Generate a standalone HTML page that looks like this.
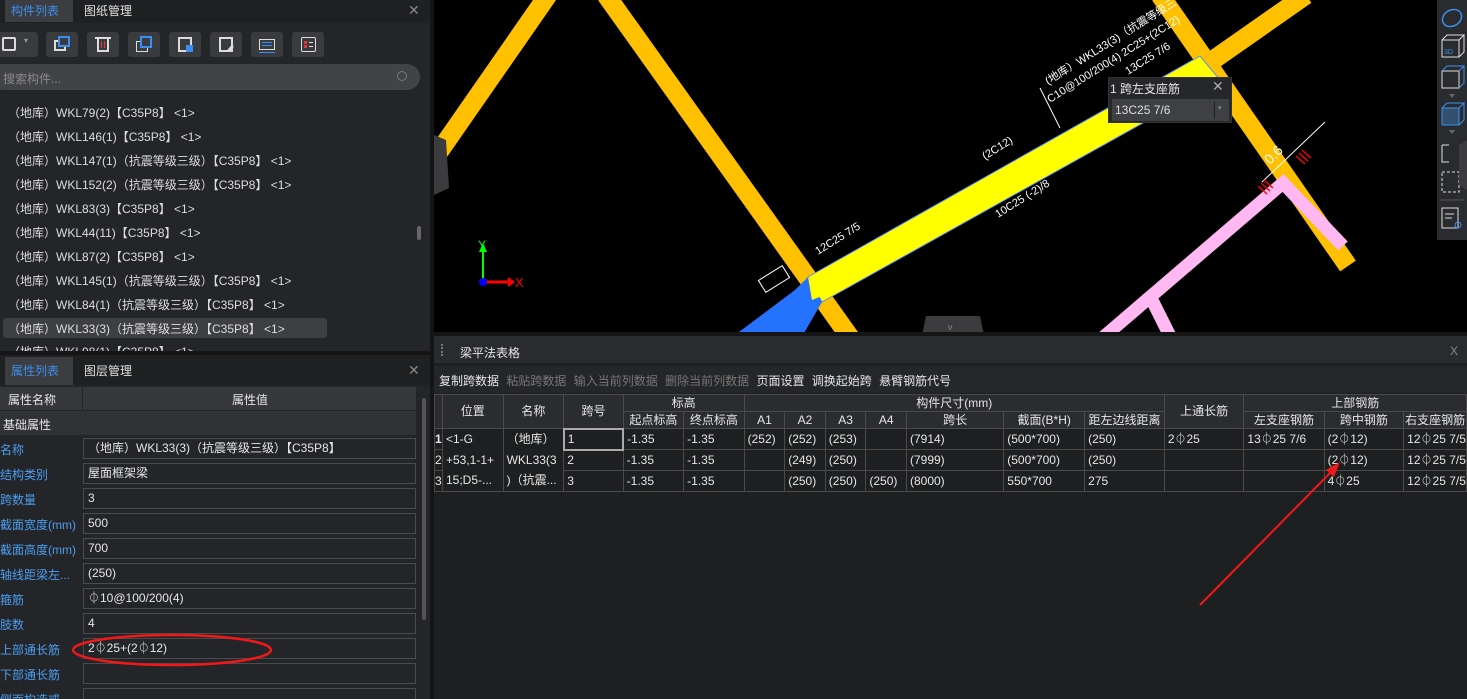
<!DOCTYPE html>
<html style="overflow:hidden;width:1467px;height:699px"><head><meta charset="utf-8"><style>
*{margin:0;padding:0;box-sizing:border-box}
body{width:1467px;height:699px;overflow:hidden;background:#000;font-family:"Liberation Sans","Noto Sans CJK SC",sans-serif;font-size:12px;color:#ddd;position:relative}
.abs{position:absolute}
.lp{left:0;width:430px;background:#242528}
.tab{position:absolute;height:22px;line-height:22px;font-size:12px;padding:0 6px}
.tb{position:absolute;top:32px;width:32px;height:25px;background:#3a3b3e;border-radius:3px}
.li{position:absolute;left:8px;font-size:12px;color:#ddd;white-space:nowrap}
.pn{position:absolute;left:0;color:#4a9ef0;font-size:12px;white-space:nowrap}
.pv{position:absolute;left:83px;width:333px;height:21px;border:1px solid #4a4b4e;background:#242528;padding-left:4px;line-height:19px;font-size:12px;color:#e6e6e6;overflow:hidden}
table{border-collapse:collapse;position:absolute;left:434px;top:394px;table-layout:fixed}
td{border:1px solid #4a4a4a;height:21px;line-height:19px;font-size:12px;color:#e6e6e6;padding:0 0 0 3px;white-space:nowrap;overflow:hidden;background:#1e1f21}
td.h{text-align:center;padding:0;background:#2b2c2f;height:17px;line-height:15px}
td.nb{border-bottom:none}
td.nt{border-top:none}
</style></head><body>
<!-- left top panel -->
<div class="abs lp" style="top:0;height:352px"></div>
<div class="abs" style="left:0;top:0;width:430px;height:23px;background:#1f2022"></div>
<div class="tab" style="left:5px;top:0;background:#3c3d40;color:#3b8ff0;width:68px">构件列表</div>
<div class="tab" style="left:78px;top:0;color:#e0e0e0">图纸管理</div>
<div class="abs" style="left:408px;top:2px;color:#888;font-size:14px">✕</div>
<div class="tb" style="left:-6px;width:44px"><div class="abs" style="left:8px;top:5px;width:14px;height:14px;border:2px solid #ddd;border-radius:2px"></div><div class="abs" style="left:30px;top:4px;color:#999;font-size:8px">▾</div></div>
<div class="tb" style="left:46px"><div class="abs" style="left:8px;top:8px;width:12px;height:11px;border:2px solid #ddd"></div><div class="abs" style="left:12px;top:4px;width:12px;height:11px;border:2px solid #3a8ff0;background:#3a3b3e"></div></div>
<div class="tb" style="left:87px"><div class="abs" style="left:10px;top:6px;width:12px;height:14px;border:2px solid #ddd;border-top:none"></div><div class="abs" style="left:8px;top:5px;width:16px;height:2px;background:#ddd"></div><div class="abs" style="left:14px;top:9px;width:4px;height:7px;border-left:1px solid #e33;border-right:1px solid #e33"></div></div>
<div class="tb" style="left:128px"><div class="abs" style="left:8px;top:9px;width:12px;height:11px;border:1px solid #ddd"></div><div class="abs" style="left:12px;top:4px;width:12px;height:12px;border:2px solid #3a8ff0;background:#3a3b3e"></div></div>
<div class="tb" style="left:169px"><div class="abs" style="left:9px;top:5px;width:14px;height:15px;border:2px solid #ddd"></div><div class="abs" style="left:17px;top:13px;width:7px;height:7px;background:#3a8ff0"></div></div>
<div class="tb" style="left:210px"><div class="abs" style="left:9px;top:5px;width:14px;height:15px;border:2px solid #ddd"></div><div class="abs" style="left:19px;top:13px;width:3px;height:7px;background:#ddd;transform:rotate(40deg)"></div></div>
<div class="tb" style="left:251px"><div class="abs" style="left:8px;top:7px;width:16px;height:11px;border:1px solid #ddd"></div><div class="abs" style="left:11px;top:10px;width:10px;height:1px;background:#3a8ff0;box-shadow:0 3px #3a8ff0"></div><div class="abs" style="left:8px;top:20px;width:16px;height:1px;background:#3a8ff0"></div></div>
<div class="tb" style="left:292px"><div class="abs" style="left:9px;top:5px;width:15px;height:15px;border:1px solid #ddd;border-radius:2px"></div><div class="abs" style="left:12px;top:9px;width:3px;height:3px;background:#e33;box-shadow:0 4px #e33"></div><div class="abs" style="left:17px;top:10px;width:4px;height:1px;background:#ddd;box-shadow:0 4px #ddd"></div></div>
<div class="abs" style="left:-10px;top:64px;width:430px;height:26px;background:#424346;border-radius:13px"></div>
<div class="abs" style="left:3px;top:70px;color:#8a8a8a;font-size:12px">搜索构件...</div>
<div class="abs" style="left:397px;top:71px;width:10px;height:10px;border:1.5px solid #777;border-radius:50%"></div>
<div class="abs" style="left:3px;top:318px;width:324px;height:20px;background:#3e3f42;border-radius:3px"></div>
<div class="li" style="top:104px">（地库）WKL79(2)【C35P8】 &lt;1&gt;</div>
<div class="li" style="top:128px">（地库）WKL146(1)【C35P8】 &lt;1&gt;</div>
<div class="li" style="top:152px">（地库）WKL147(1)（抗震等级三级）【C35P8】 &lt;1&gt;</div>
<div class="li" style="top:176px">（地库）WKL152(2)（抗震等级三级）【C35P8】 &lt;1&gt;</div>
<div class="li" style="top:200px">（地库）WKL83(3)【C35P8】 &lt;1&gt;</div>
<div class="li" style="top:224px">（地库）WKL44(11)【C35P8】 &lt;1&gt;</div>
<div class="li" style="top:248px">（地库）WKL87(2)【C35P8】 &lt;1&gt;</div>
<div class="li" style="top:272px">（地库）WKL145(1)（抗震等级三级）【C35P8】 &lt;1&gt;</div>
<div class="li" style="top:296px">（地库）WKL84(1)（抗震等级三级）【C35P8】 &lt;1&gt;</div>
<div class="li" style="top:320px">（地库）WKL33(3)（抗震等级三级）【C35P8】 &lt;1&gt;</div>
<div class="li" style="top:343px;height:8px;overflow:hidden">（地库）WKL98(1)【C35P8】 &lt;1&gt;</div>
<div class="abs" style="left:417px;top:226px;width:4px;height:14px;background:#666;border-radius:2px"></div>
<div class="abs" style="left:0;top:351px;width:430px;height:4px;background:#151515"></div>
<!-- left bottom panel -->
<div class="abs lp" style="top:355px;height:344px"></div>
<div class="abs" style="left:0;top:355px;width:430px;height:30px;background:#1f2022"></div>
<div class="tab" style="left:5px;top:357px;height:28px;line-height:28px;background:#3c3d40;color:#3b8ff0;width:68px">属性列表</div>
<div class="tab" style="left:78px;top:357px;height:28px;line-height:28px;color:#e0e0e0">图层管理</div>
<div class="abs" style="left:408px;top:362px;color:#888;font-size:14px">✕</div>
<div class="abs" style="left:0;top:387px;width:416px;height:23px;background:#36373a"></div>
<div class="abs" style="left:82px;top:387px;width:1px;height:23px;background:#242528"></div>
<div class="abs" style="left:8px;top:391px;color:#e6e6e6">属性名称</div>
<div class="abs" style="left:232px;top:391px;color:#e6e6e6">属性值</div>
<div class="abs" style="left:0;top:411px;width:416px;height:24px;background:#313235"></div>
<div class="abs" style="left:3px;top:416px;color:#e6e6e6">基础属性</div>
<div class="pn" style="top:441px">名称</div><div class="pv" style="top:438px">（地库）WKL33(3)（抗震等级三级）【C35P8】</div>
<div class="pn" style="top:466px">结构类别</div><div class="pv" style="top:463px">屋面框架梁</div>
<div class="pn" style="top:491px">跨数量</div><div class="pv" style="top:488px">3</div>
<div class="pn" style="top:516px">截面宽度(mm)</div><div class="pv" style="top:513px">500</div>
<div class="pn" style="top:541px">截面高度(mm)</div><div class="pv" style="top:538px">700</div>
<div class="pn" style="top:566px">轴线距梁左...</div><div class="pv" style="top:563px">(250)</div>
<div class="pn" style="top:591px">箍筋</div><div class="pv" style="top:588px">⏀10@100/200(4)</div>
<div class="pn" style="top:616px">肢数</div><div class="pv" style="top:613px">4</div>
<div class="pn" style="top:641px">上部通长筋</div><div class="pv" style="top:638px">2⏀25+(2⏀12)</div>
<div class="pn" style="top:666px">下部通长筋</div><div class="pv" style="top:663px"></div>
<div class="pn" style="top:691px;height:8px;overflow:hidden">侧面构造或</div><div class="pv" style="top:688px;height:11px;border-bottom:none"></div>
<div class="abs" style="left:422px;top:398px;width:4px;height:222px;background:#555;border-radius:2px"></div>
<svg class="abs" style="left:0;top:0" width="430" height="699"><ellipse cx="172" cy="650" rx="99" ry="15" fill="none" stroke="#f01818" stroke-width="2.5"/></svg>
<div class="abs" style="left:430px;top:0;width:4px;height:699px;background:#151515"></div>
<!-- CAD -->
<svg class="abs" style="left:434px;top:0" width="1033" height="335" viewBox="434 0 1033 335">
<rect x="434" y="0" width="1033" height="335" fill="#000"/>
<g stroke="#FFC000" stroke-width="19" fill="none">
<line x1="548" y1="-5" x2="425" y2="172"/>
<line x1="606" y1="-5" x2="852" y2="340"/>
<line x1="1160" y1="-5" x2="1348" y2="266"/>
<line x1="1306" y1="-5" x2="1196" y2="72"/>
</g>
<g stroke="#FFB8F2" stroke-width="13" fill="none">
<polyline points="1100,340 1283,183 1343,246"/>
<line x1="1148" y1="292" x2="1172" y2="340"/>
</g>
<polygon points="808,277 1200,56 1220,80 822,302" fill="#FFFF00" stroke="#5a8cff" stroke-width="1"/>
<polygon points="735,335 795,290 808,277 822,302 800,340" fill="#2472ff"/>
<polygon points="808,277 812,300 822,296" fill="#FFFF00"/>
<rect x="760" y="272" width="28" height="14" fill="none" stroke="#fff" transform="rotate(-32 774 279)"/>
<g fill="#fff" font-size="11" font-family="Liberation Sans,Noto Sans CJK SC,sans-serif">
<text transform="translate(818,255) rotate(-32)">12C25 7/5</text>
<text transform="translate(985,160) rotate(-32)">(2C12)</text>
<text transform="translate(998,218) rotate(-32)">10C25 (-2)/8</text>
<text transform="translate(1048,85) rotate(-32)">(地库）WKL33(3)（抗震等级三</text>
<text transform="translate(1050,103) rotate(-32)">C10@100/200(4) 2C25+(2C12)</text>
<text transform="translate(1128,75) rotate(-32)">13C25 7/6</text>
<text transform="translate(1270,165) rotate(-45)" font-size="14">0.6</text>
</g>
<line x1="1040" y1="88" x2="1060" y2="128" stroke="#fff"/>
<line x1="1325" y1="122" x2="1262" y2="182" stroke="#fff"/>
<g stroke="#f00" stroke-width="1.5"><line x1="1296" y1="156" x2="1305" y2="164"/><line x1="1299" y1="153" x2="1308" y2="161"/><line x1="1302" y1="150" x2="1311" y2="158"/>
<line x1="1258" y1="186" x2="1267" y2="194"/><line x1="1261" y1="183" x2="1270" y2="191"/><line x1="1264" y1="180" x2="1273" y2="188"/></g>
<line x1="483" y1="282" x2="483" y2="248" stroke="#0f0" stroke-width="2"/><polygon points="479,252 487,252 483,243" fill="#0f0"/>
<line x1="483" y1="282" x2="510" y2="282" stroke="#f00" stroke-width="3"/><polygon points="508,277 508,287 515,282" fill="#f00"/>
<circle cx="483" cy="282" r="4" fill="#00f"/>
<text x="478" y="249" fill="#0f0" font-size="12" font-family="Liberation Sans">Y</text>
<text x="515" y="287" fill="#f00" font-size="13" font-family="Liberation Sans">X</text>
<path d="M434 135 L446 140 L449 188 L434 195Z" fill="#3c3c3e"/>
<path d="M926 316 L980 316 L984 335 L922 335Z" fill="#3c3c3e"/>
<text x="948" y="330" fill="#888" font-size="9">v</text>
</svg>
<!-- tooltip -->
<div class="abs" style="left:1108px;top:77px;width:124px;height:46px;background:#26272a;border:1px solid #333"></div>
<div class="abs" style="left:1110px;top:80px;font-size:12px;color:#e6e6e6">1 跨左支座筋</div>
<div class="abs" style="left:1212px;top:78px;font-size:14px;color:#aaa">✕</div>
<div class="abs" style="left:1112px;top:99px;width:117px;height:22px;background:#3f4043;font-size:12px;line-height:22px;padding-left:3px;color:#ddd">13C25 7/6</div>
<div class="abs" style="left:1214px;top:101px;width:1px;height:18px;background:#222"></div>
<div class="abs" style="left:1218px;top:104px;color:#888;font-size:7px">▾</div>
<!-- right toolbar -->
<div class="abs" style="left:1437px;top:0;width:30px;height:240px;background:#2a2b2e"></div>
<svg class="abs" style="left:1437px;top:0" width="30" height="240">
<ellipse cx="15" cy="18" rx="10" ry="8" fill="none" stroke="#3a8ff0" stroke-width="1.5" transform="rotate(-30 15 18)"/>
<rect x="5" y="40" width="17" height="17" fill="none" stroke="#ddd"/><path d="M5 40 L10 35 L27 35 L22 40 M27 35 L27 52 L22 57" fill="none" stroke="#ddd"/><text x="7" y="54" fill="#3a8ff0" font-size="7">3D</text>
<rect x="5" y="71" width="17" height="17" fill="none" stroke="#ddd"/><path d="M5 71 L10 66 L27 66 L22 71 M27 66 L27 83 L22 88" fill="none" stroke="#3a8ff0"/>
<polygon points="12,94 18,94 15,98" fill="#666"/>
<rect x="5" y="108" width="17" height="17" fill="#33506e" stroke="#3a8ff0"/><path d="M5 108 L10 103 L27 103 L22 108 M27 103 L27 120 L22 125" fill="none" stroke="#3a8ff0"/>
<polygon points="12,130 18,130 15,134" fill="#666"/>
<path d="M5 145 L5 162 L12 162 M5 145 L12 145" fill="none" stroke="#ddd"/>
<rect x="5" y="172" width="17" height="20" fill="none" stroke="#ddd" stroke-dasharray="3 2"/>
<line x1="3" y1="200" x2="27" y2="200" stroke="#555"/>
<rect x="5" y="208" width="16" height="20" fill="none" stroke="#ddd"/><line x1="8" y1="214" x2="17" y2="214" stroke="#ddd"/><line x1="8" y1="218" x2="15" y2="218" stroke="#ddd"/><circle cx="21" cy="225" r="3" fill="none" stroke="#3a8ff0"/>
<path d="M30 140 L22 145 L22 185 L30 190Z" fill="#3c3c3e"/>
</svg>
<!-- bottom panel -->
<div class="abs" style="left:434px;top:332px;width:1033px;height:4px;background:#151515"></div>
<div class="abs" style="left:434px;top:336px;width:1033px;height:363px;background:#1e1f21"></div>
<div class="abs" style="left:434px;top:336px;width:1033px;height:27px;background:#2a2b2e"></div>
<div class="abs" style="left:441px;top:344px;width:2px;height:12px;border-left:2px dotted #777"></div>
<div class="abs" style="left:460px;top:344px;color:#e6e6e6">梁平法表格</div>
<div class="abs" style="left:1450px;top:344px;color:#888;font-size:12px">X</div>
<div class="abs" style="left:434px;top:366px;width:1033px;height:27px;background:#252629"></div>
<div class="abs" style="left:439px;top:372px;white-space:nowrap;word-spacing:4px"><span style="color:#e6e6e6">复制跨数据</span> <span style="color:#777">粘贴跨数据</span> <span style="color:#777">输入当前列数据</span> <span style="color:#777">删除当前列数据</span> <span style="color:#e6e6e6">页面设置</span> <span style="color:#e6e6e6">调换起始跨</span> <span style="color:#e6e6e6">悬臂钢筋代号</span></div>
<table>
<colgroup><col style="width:8px"><col style="width:61px"><col style="width:61px"><col style="width:61px"><col style="width:61px"><col style="width:61px"><col style="width:41px"><col style="width:41px"><col style="width:41px"><col style="width:41px"><col style="width:100px"><col style="width:82px"><col style="width:80px"><col style="width:81px"><col style="width:81px"><col style="width:81px"><col style="width:60px"></colgroup>
<tr><td class="h" rowspan="2"></td><td class="h" rowspan="2">位置</td><td class="h" rowspan="2">名称</td><td class="h" rowspan="2">跨号</td><td class="h" colspan="2">标高</td><td class="h" colspan="7">构件尺寸(mm)</td><td class="h" rowspan="2">上通长筋</td><td class="h" colspan="3">上部钢筋</td></tr>
<tr><td class="h">起点标高</td><td class="h">终点标高</td><td class="h">A1</td><td class="h">A2</td><td class="h">A3</td><td class="h">A4</td><td class="h">跨长</td><td class="h">截面(B*H)</td><td class="h">距左边线距离</td><td class="h">左支座钢筋</td><td class="h">跨中钢筋</td><td class="h">右支座钢筋</td></tr>
<tr><td style="padding:0;font-weight:bold">1</td><td class="nb">&lt;1-G</td><td class="nb">（地库）</td><td style="border:2px solid #aaa">1</td><td>-1.35</td><td>-1.35</td><td>(252)</td><td>(252)</td><td>(253)</td><td></td><td>(7914)</td><td>(500*700)</td><td>(250)</td><td>2⏀25</td><td>13⏀25 7/6</td><td>(2⏀12)</td><td>12⏀25 7/5</td></tr>
<tr><td style="padding:0">2</td><td class="nb nt">+53,1-1+</td><td class="nb nt">WKL33(3</td><td>2</td><td>-1.35</td><td>-1.35</td><td></td><td>(249)</td><td>(250)</td><td></td><td>(7999)</td><td>(500*700)</td><td>(250)</td><td></td><td></td><td>(2⏀12)</td><td>12⏀25 7/5</td></tr>
<tr><td style="padding:0">3</td><td class="nt">15;D5-...</td><td class="nt">)（抗震...</td><td>3</td><td>-1.35</td><td>-1.35</td><td></td><td>(250)</td><td>(250)</td><td>(250)</td><td>(8000)</td><td>550*700</td><td>275</td><td></td><td></td><td>4⏀25</td><td>12⏀25 7/5</td></tr>
</table>
<svg class="abs" style="left:0;top:0" width="1467" height="699"><line x1="1200" y1="605" x2="1333" y2="470" stroke="#f01818" stroke-width="2"/><polygon points="1340,462 1326,470 1334,477" fill="#f01818"/></svg>
</body></html>
